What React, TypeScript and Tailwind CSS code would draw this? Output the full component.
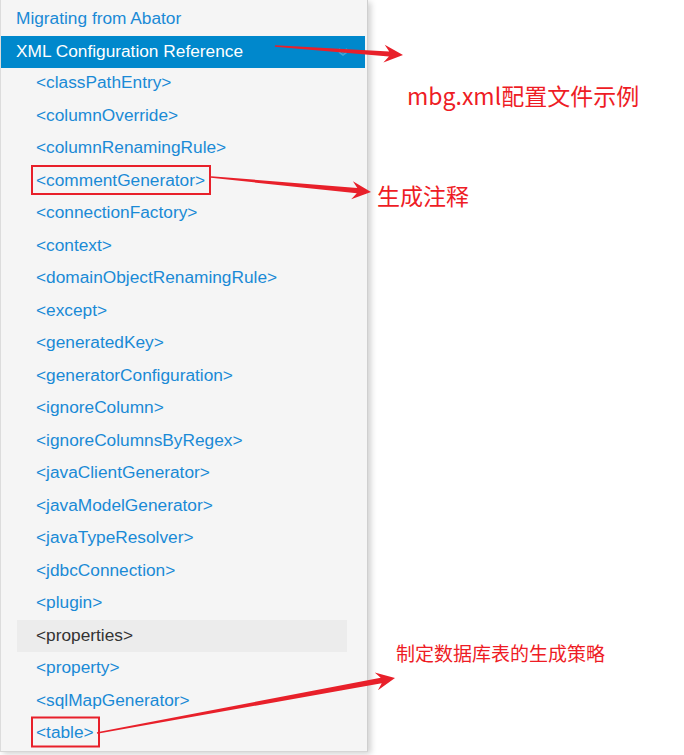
import React from 'react';

type Pt = [number, number];

const subItems = [
  '<classPathEntry>',
  '<columnOverride>',
  '<columnRenamingRule>',
  '<commentGenerator>',
  '<connectionFactory>',
  '<context>',
  '<domainObjectRenamingRule>',
  '<except>',
  '<generatedKey>',
  '<generatorConfiguration>',
  '<ignoreColumn>',
  '<ignoreColumnsByRegex>',
  '<javaClientGenerator>',
  '<javaModelGenerator>',
  '<javaTypeResolver>',
  '<jdbcConnection>',
  '<plugin>',
  '<properties>',
  '<property>',
  '<sqlMapGenerator>',
  '<table>',
];

// tapered arrow with a notched head, like a screenshot-tool arrow
function arrowPoints(s: Pt, t: Pt, headLen = 19, headHalf = 9, w0 = 0.8, w1 = 2.6): string {
  const dx = t[0] - s[0];
  const dy = t[1] - s[1];
  const len = Math.hypot(dx, dy);
  const ux = dx / len;
  const uy = dy / len;
  const nx = -uy;
  const ny = ux;
  const bx = t[0] - ux * headLen;
  const by = t[1] - uy * headLen;
  const nbx = bx + ux * 5;
  const nby = by + uy * 5;
  const pts: Pt[] = [
    [s[0] + nx * w0, s[1] + ny * w0],
    [nbx + nx * w1, nby + ny * w1],
    [bx + nx * headHalf, by + ny * headHalf],
    t,
    [bx - nx * headHalf, by - ny * headHalf],
    [nbx - nx * w1, nby - ny * w1],
    [s[0] - nx * w0, s[1] - ny * w0],
  ];
  return pts.map((p) => `${p[0].toFixed(1)},${p[1].toFixed(1)}`).join(' ');
}

function Sidebar() {
  return (
    <div className="w-[368px] h-[752px] pt-[1px] bg-[#f5f5f5] border-l border-l-[#dcdcdc] border-r border-r-[#cfcfcf] border-b border-b-[#d6d6d6] shadow-[3px_2px_6px_rgba(0,0,0,0.18)] flex flex-col">
      <div className="h-[35px] pt-[1px] flex items-center pl-[15px] text-[#1a8ad6]">Migrating from Abator</div>
      <div className="h-8 mr-[2px] bg-[#0088cc] text-white flex items-center pl-[15px] justify-between pr-4">
        <span>XML Configuration Reference</span>
        <svg width="12" height="10" viewBox="0 0 12 10" className="opacity-25">
          <path d="M2 2 L6 5 L10 2 M2 5 L6 8 L10 5" fill="none" stroke="#ffffff" strokeWidth="1.6" />
        </svg>
      </div>
      <ul className="ml-4 mr-5 -mt-[1px]">
        {subItems.map((item) => (
          <li
            key={item}
            className={
              item === '<properties>'
                ? 'h-[32.5px] flex items-center pl-[19px] bg-[#ececec] text-[#333333]'
                : 'h-[32.5px] flex items-center pl-[19px] text-[#1a8ad6]'
            }
          >
            {item}
          </li>
        ))}
      </ul>
    </div>
  );
}

export default function App() {
  return (
    <div
      className="relative w-[684px] h-[755px] bg-white overflow-hidden text-[17.3px]"
      style={{ fontFamily: '"Liberation Sans", Arial, sans-serif' }}
    >
      <Sidebar />

      {/* annotations */}
      <svg className="absolute inset-0 pointer-events-none" width="684" height="755">
        <rect x="32" y="166" width="178" height="28" fill="none" stroke="#e8202a" strokeWidth="2" />
        <rect x="32" y="717.5" width="67" height="29" fill="none" stroke="#e8202a" strokeWidth="2" />
        <polygon points={arrowPoints([275, 46], [403, 55])} fill="#e8202a" />
        <polygon points={arrowPoints([211, 177], [371, 192])} fill="#e8202a" />
        <polygon points={arrowPoints([97, 733], [395, 678], 19, 9, 0.8, 2.8)} fill="#e8202a" />
      </svg>
      <div
        className="absolute left-[407px] top-[80px] text-[23px] leading-[30px] text-[#ee1c25] whitespace-nowrap"
        style={{ fontFamily: '"Noto Sans CJK SC", "Noto Sans", sans-serif' }}
      >
        mbg.xml配置文件示例
      </div>
      <div
        className="absolute left-[377px] top-[179px] text-[23px] leading-[32px] text-[#ee1c25] whitespace-nowrap"
        style={{ fontFamily: '"Noto Sans CJK SC", "Noto Sans", sans-serif' }}
      >
        生成注释
      </div>
      <div
        className="absolute left-[396px] top-[640px] text-[19px] leading-[26px] text-[#ee1c25] whitespace-nowrap"
        style={{ fontFamily: '"Noto Sans CJK SC", "Noto Sans", sans-serif' }}
      >
        制定数据库表的生成策略
      </div>
    </div>
  );
}
